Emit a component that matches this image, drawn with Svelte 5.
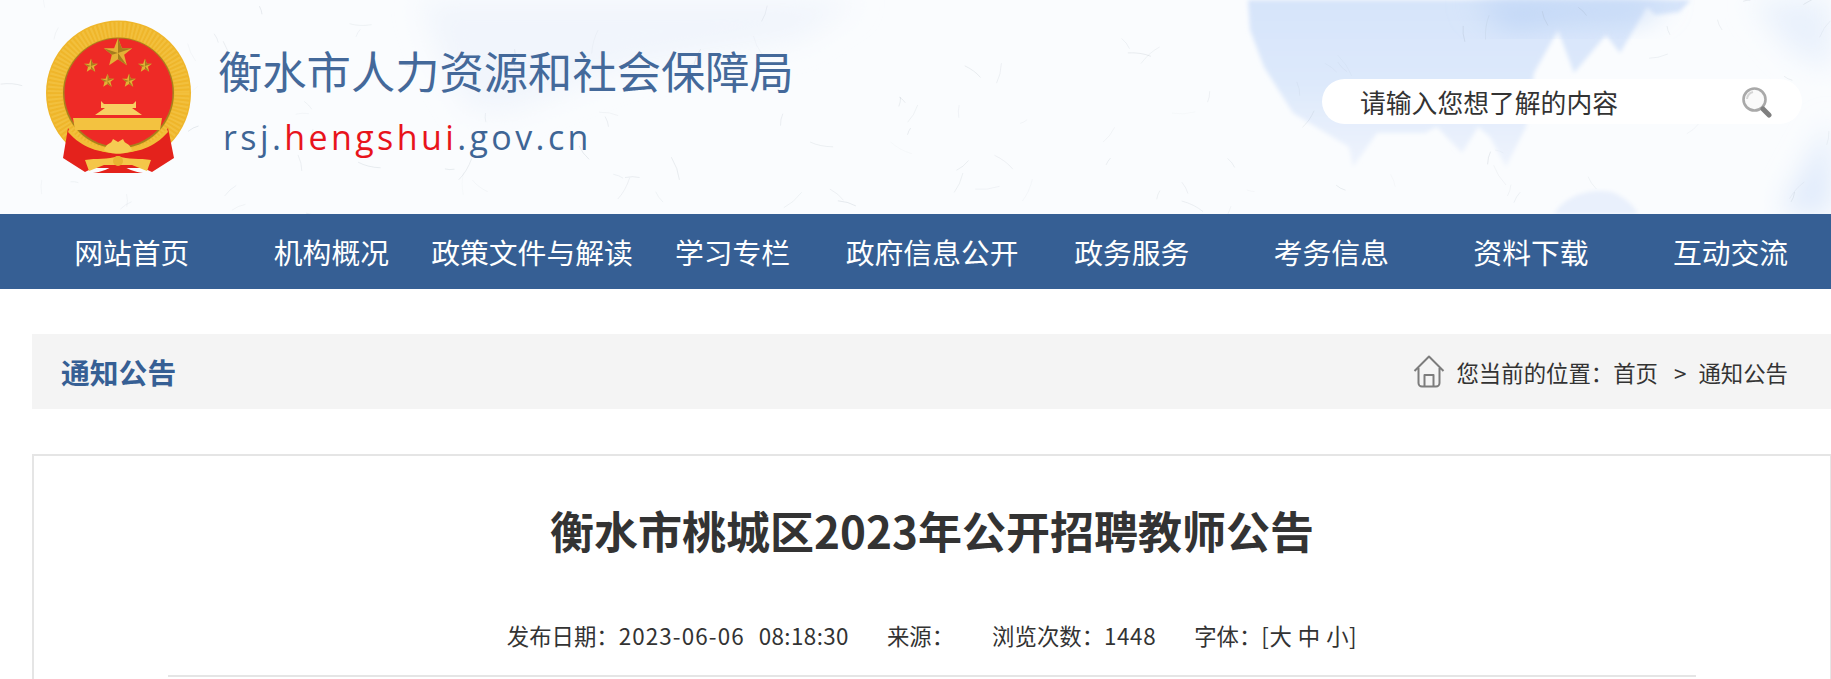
<script lang="ts">
  const navItems = ["网站首页", "机构概况", "政策文件与解读", "学习专栏", "政府信息公开", "政务服务", "考务信息", "资料下载", "互动交流"];

  // paper fibres in the header background, seeded so they stay put between runs
  let seed = 41;
  function rnd() {
    seed = (seed * 16807) % 2147483647;
    return seed / 2147483647;
  }
  const fibres = Array.from({ length: 120 }, () => {
    const x = rnd() * 1831;
    const y = rnd() * 214;
    const a = rnd() * Math.PI * 2;
    const l = 4 + rnd() * 10;
    return {
      d: `M${x.toFixed(1)} ${y.toFixed(1)}q${(Math.cos(a) * l).toFixed(1)} ${(Math.sin(a) * l).toFixed(1)} ${(Math.cos(a + 0.2) * l * 1.8).toFixed(1)} ${(Math.sin(a + 0.2) * l * 1.8).toFixed(1)}`,
      o: (0.06 + rnd() * 0.18).toFixed(2),
    };
  });

  const star = "M0 -10L2.6 -3.2L9.5 -3.1L4.1 1.2L5.9 8.1L0 4.2L-5.9 8.1L-4.1 1.2L-9.5 -3.1L-2.6 -3.2Z";
  const facets = "M0 -10L0 0L9.5 -3.1L2.6 -3.2ZM0 0L5.9 8.1L0 4.2ZM0 0L-9.5 -3.1L-4.1 1.2Z";
  const stars = [
    { x: 118, y: 53, s: 1.5 },
    { x: 91, y: 66, s: 0.72 },
    { x: 145, y: 66, s: 0.72 },
    { x: 107.5, y: 81, s: 0.72 },
    { x: 129, y: 81, s: 0.72 },
  ];
</script>

<div class="page">
  <header class="top">
    <svg class="wash" width="1831" height="214" viewBox="0 0 1831 214" aria-hidden="true">
      <defs>
        <linearGradient id="washA" x1="0" y1="0" x2="0" y2="1">
          <stop offset="0" stop-color="#d6e4fa" />
          <stop offset="0.5" stop-color="#dde9fb" />
          <stop offset="1" stop-color="#eff4fd" />
        </linearGradient>
        <filter id="soft" x="-10%" y="-10%" width="120%" height="120%"><feGaussianBlur stdDeviation="2.2" /></filter>
        <filter id="softer" x="-30%" y="-30%" width="160%" height="160%"><feGaussianBlur stdDeviation="14" /></filter>
      </defs>
      <rect width="1831" height="214" fill="#fafcfe" />
      <path d="M420 0L440 60L470 110L510 112L620 70L800 40L860 0Z" fill="#f1f5fc" filter="url(#softer)" />
      <path d="M1750 0H1831V70L1790 50Z" fill="#e9f1fc" filter="url(#softer)" />
      <path d="M1831 120V214H1780Z" fill="#dfeafb" filter="url(#softer)" />
      <path d="M1248 0L1250 30L1264 67L1293 113L1321 130L1349 147L1353 167L1377 133L1425 133L1437 127L1462 153L1478 127L1490 137L1506 167L1526 127L1534 73L1558 30L1574 73L1606 35L1620 53L1647 7L1655 15L1679 12L1691 0Z" fill="url(#washA)" filter="url(#soft)" />
      <path d="M1470 0L1510 30L1560 22L1640 18L1670 0Z" fill="#bfd5f6" filter="url(#softer)" />
      <path d="M1554 214C1565 195 1590 188 1612 192C1626 198 1634 206 1638 214Z" fill="#e9f0fc" filter="url(#soft)" />
      <g fill="none" stroke="#8c9aa8" stroke-width="0.8">
        {#each fibres as f}
          <path d={f.d} opacity={f.o} />
        {/each}
      </g>
    </svg>

    <svg class="emblem" width="150" height="156" viewBox="44 20 150 156" aria-hidden="true">
      <defs>
        <filter id="raster" x="-5%" y="-5%" width="110%" height="110%"><feGaussianBlur stdDeviation="0.45" /></filter>
      </defs>
      <g filter="url(#raster)">
        <circle cx="118.5" cy="93" r="72.5" fill="#efb62c" />
        <circle cx="118.5" cy="93" r="63.5" fill="none" stroke="#f7d05a" stroke-width="15" stroke-dasharray="2 2" opacity="0.4" />
        <circle cx="118.5" cy="93" r="55.5" fill="#a8801f" />
        <circle cx="118.5" cy="92.5" r="54" fill="#ee2c25" />
        {#each stars as s}
          <g transform="translate({s.x} {s.y}) scale({s.s})">
            <path d={star} fill="#e3b135" />
            <path d={facets} fill="#a67c1f" />
          </g>
        {/each}
        <path d="M101 101L104 104H133L136 101V108H132L142 115H95L105 108H101Z" fill="#f8cf62" />
        <path d="M73 118H162L160 130H75Z" fill="#f3c23f" />
        <path d="M68 128C80 146 100 153 118 153C136 153 156 146 168 128L174 158L152 172L143 168H93L85 172L63 158Z" fill="#e4231b" />
        <path d="M69 129C82 143 100 149 118 149C136 149 154 143 167 129L168 132C154 148 136 153 118 153C100 153 82 148 68 132Z" fill="#f2bd38" />
        <path d="M104 150C107 142 111 145 113 139L118 142L123 139C125 145 129 142 132 150C126 155 110 155 104 150Z" fill="#f5cb52" />
        <path d="M85 160C96 158 108 160 118 156C128 160 140 158 151 160L147 171L132 165H104L89 171Z" fill="#f4c648" />
        <path d="M93 173C102 172 110 168 118 164C126 168 134 172 143 173Z" fill="#e4231b" />
        <circle cx="118" cy="161" r="5" fill="#e8b333" />
      </g>
    </svg>

    <div class="brand">
      <div class="brand-name">衡水市人力资源和社会保障局</div>
      <div class="brand-url">rsj.<span class="red">hengshui</span>.gov.cn</div>
    </div>

    <div class="search">
      <input class="search-input" type="text" placeholder="请输入您想了解的内容" />
      <svg class="search-icon" width="32" height="32" viewBox="0 0 32 32" aria-hidden="true">
        <circle cx="13.5" cy="13.5" r="11" fill="#fafafa" stroke="#a9a9a9" stroke-width="2.6" />
        <path d="M6 13a8 8 0 0 1 6 -7" fill="none" stroke="#d5d5d5" stroke-width="2" />
        <path d="M22 23l6 6" stroke="#7f7f7f" stroke-width="5" stroke-linecap="round" />
      </svg>
    </div>
  </header>

  <nav class="nav">
    {#each navItems as item}
      <a class="nav-item" href="#top">{item}</a>
    {/each}
  </nav>

  <div class="main">
    <div class="crumbbar">
      <span class="crumb-title">通知公告</span>
      <div class="crumbs">
        <svg width="32" height="33" viewBox="0 0 32 33" aria-hidden="true">
          <path d="M1.5 16L16 1.5L30.5 16M5.5 13V28a3.5 3.5 0 0 0 3.5 3.5H23a3.5 3.5 0 0 0 3.5 -3.5V13M11.5 31.5V20H20.5V31.5" fill="none" stroke="#7c7c7c" stroke-width="2" stroke-linejoin="round" />
        </svg>
        <span class="crumb-text">您当前的位置：首页<span class="sep">&gt;</span>通知公告</span>
      </div>
    </div>

    <article class="article">
      <h1 class="title">衡水市桃城区2023年公开招聘教师公告</h1>
      <div class="meta">
        <span>发布日期：<span class="date">2023-06-06</span><span class="time">08:18:30</span></span>
        <span>来源：</span>
        <span>浏览次数：<span class="count">1448</span></span>
        <span>字体：<span class="size">[大 中 小]</span></span>
      </div>
    </article>
  </div>
</div>

<style>
  :global(body) {
    margin: 0;
    background: #fff;
  }

  .page {
    width: 1831px;
    overflow: hidden;
    height: 679px;
    font-family: "Noto Sans CJK SC", "Noto Sans", sans-serif;
    color: #333;
  }

  .top {
    position: relative;
    height: 214px;
    display: flex;
    align-items: flex-start;
  }

  .wash {
    position: absolute;
    left: 0;
    top: 0;
  }

  .emblem {
    position: relative;
    flex-shrink: 0;
    margin: 20px 0 0 44px;
  }

  .brand {
    position: relative;
    margin: 41px 0 0 24px;
    width: 700px;
  }

  .brand-name {
    font-size: 44.3px;
    line-height: 58px;
    color: #44699a;
    white-space: nowrap;
  }

  .brand-url {
    margin: 16px 0 0 5px;
    font-family: "Open Sans", sans-serif;
    font-size: 34px;
    line-height: 44px;
    letter-spacing: 3.4px;
    color: #3e6595;
  }

  .red {
    color: #e8141c;
  }

  .search {
    position: relative;
    margin: 79px 29px 0 auto;
    width: 480px;
    height: 45px;
    border-radius: 23px;
    background: #fff;
    display: flex;
    align-items: center;
  }

  .search-input {
    flex: 1;
    min-width: 0;
    border: 0;
    outline: 0;
    background: transparent;
    margin-left: 38px;
    padding: 0;
    font: inherit;
    font-size: 25.8px;
    color: #333;
  }

  .search-input::placeholder {
    color: #333;
    opacity: 1;
  }

  .search-icon {
    margin-right: 29px;
    flex-shrink: 0;
  }

  .nav {
    height: 75px;
    background: #365f94;
    display: flex;
    padding-left: 32px;
    width: 1800px;
  }

  .nav-item {
    flex: 0 0 199.6px;
    text-align: center;
    line-height: 75px;
    font-size: 28.8px;
    color: #fff;
    text-decoration: none;
    white-space: nowrap;
  }

  .main {
    margin-left: 32px;
    width: 1800px;
  }

  .crumbbar {
    margin-top: 45px;
    height: 75px;
    background: #f4f4f4;
    display: flex;
    align-items: center;
    justify-content: space-between;
    padding: 0 44px 0 29px;
  }

  .crumb-title {
    font-size: 28.8px;
    font-weight: 700;
    color: #365f94;
  }

  .crumbs {
    display: flex;
    align-items: center;
    gap: 11px;
  }

  .crumb-text {
    font-size: 22.4px;
    white-space: nowrap;
  }

  .sep {
    margin: 0 12px 0 16px;
  }

  .article {
    margin-top: 45px;
    border: 2px solid #e5e5e5;
    border-bottom: 0;
    height: 225px;
    box-sizing: border-box;
    padding: 0 134px;
  }

  .title {
    margin: 41px 0 0;
    text-align: center;
    font-size: 44px;
    line-height: 66px;
    font-weight: 700;
    color: #333;
  }

  .meta {
    margin-top: 54px;
    height: 58px;
    display: flex;
    justify-content: center;
    gap: 38px;
    font-size: 22.4px;
    line-height: 36px;
    border-bottom: 2px solid #e5e5e5;
    white-space: nowrap;
  }

  .date {
    letter-spacing: 1.1px;
  }

  .time {
    margin-left: 14px;
    letter-spacing: 0.4px;
  }

  .count {
    letter-spacing: 0.6px;
  }

  .size {
    letter-spacing: 0.5px;
  }
</style>
